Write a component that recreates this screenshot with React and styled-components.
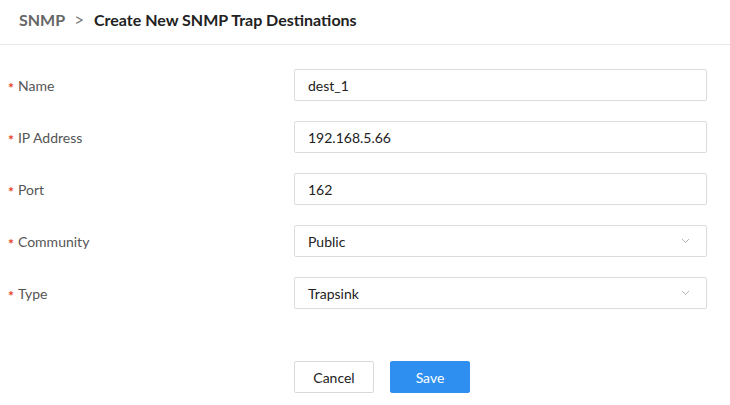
import styled, { createGlobalStyle } from "styled-components"

const GlobalStyle = createGlobalStyle`
body {
  margin: 0;
  background: #fff;
  font-family: Lato, "Noto Sans", sans-serif;
}
`

const fields = [
  { label: "Name", value: "dest_1" },
  { label: "IP Address", value: "192.168.5.66" },
  { label: "Port", value: "162" },
  { label: "Community", value: "Public", select: true },
  { label: "Type", value: "Trapsink", select: true },
]

function Chevron() {
  return (
    <svg width="9" height="6" viewBox="0 0 9 6">
      <path d="M1 1l3.5 3.5L8 1" fill="none" stroke="#b5b5b5" strokeWidth="1" />
    </svg>
  )
}

function Field({ label, value, select }) {
  return (
    <Row>
      <Label>
        <Star>*</Star>
        {label}
      </Label>
      <Box>
        <span>{value}</span>
        {select && <Chevron />}
      </Box>
    </Row>
  )
}

export default function App() {
  return (
    <>
      <GlobalStyle />
      <Page>
        <Header>
          <Crumb>SNMP</Crumb>
          <Arrow>&gt;</Arrow>
          <Title>Create New SNMP Trap Destinations</Title>
        </Header>
        <Form>
          {fields.map((f) => (
            <Field key={f.label} label={f.label} value={f.value} select={f.select} />
          ))}
          <Actions>
            <Button>Cancel</Button>
            <Button primary>Save</Button>
          </Actions>
        </Form>
      </Page>
    </>
  )
}

const Page = styled.div`
  width: 730px;
  height: 405px;
  overflow: hidden;
`

const Header = styled.div`
  height: 45px;
  display: flex;
  align-items: center;
  padding-left: 19px;
  padding-bottom: 5px;
  box-sizing: border-box;
  border-bottom: 1px solid #e8e8e8;
  font-size: 16px;
  font-weight: 700;
`

const Crumb = styled.span`
  color: #666;
`

const Arrow = styled.span`
  color: #777;
  font-weight: 400;
  font-size: 17px;
  margin: 0 10px 0 9px;
`

const Title = styled.span`
  color: #222;
`

const Form = styled.div`
  padding-top: 24px;
  display: flex;
  flex-direction: column;
  gap: 20px;
`

const Row = styled.div`
  display: flex;
  align-items: center;
  padding-left: 8px;
`

const Label = styled.div`
  width: 286px;
  font-size: 14px;
  color: #555;
  display: flex;
  align-items: center;
`

const Star = styled.span`
  color: #e2401c;
  font-size: 14px;
  font-weight: 700;
  margin-right: 4px;
  position: relative;
  top: 2px;
`

const Box = styled.div`
  width: 413px;
  height: 32px;
  box-sizing: border-box;
  border: 1px solid #dcdcdc;
  border-radius: 2px;
  padding: 0 16px 0 13px;
  display: flex;
  align-items: center;
  justify-content: space-between;
  font-size: 14px;
  color: #222;
`

const Actions = styled.div`
  display: flex;
  gap: 16px;
  margin-top: 32px;
  padding-left: 294px;
`

const Button = styled.button`
  width: 80px;
  height: 32px;
  border-radius: 2px;
  font-family: inherit;
  font-size: 14px;
  border: 1px solid ${(p) => (p.primary ? "#2e8ff0" : "#d9d9d9")};
  background: ${(p) => (p.primary ? "#2e8ff0" : "#fff")};
  color: ${(p) => (p.primary ? "#fff" : "#222")};
  cursor: pointer;
`
